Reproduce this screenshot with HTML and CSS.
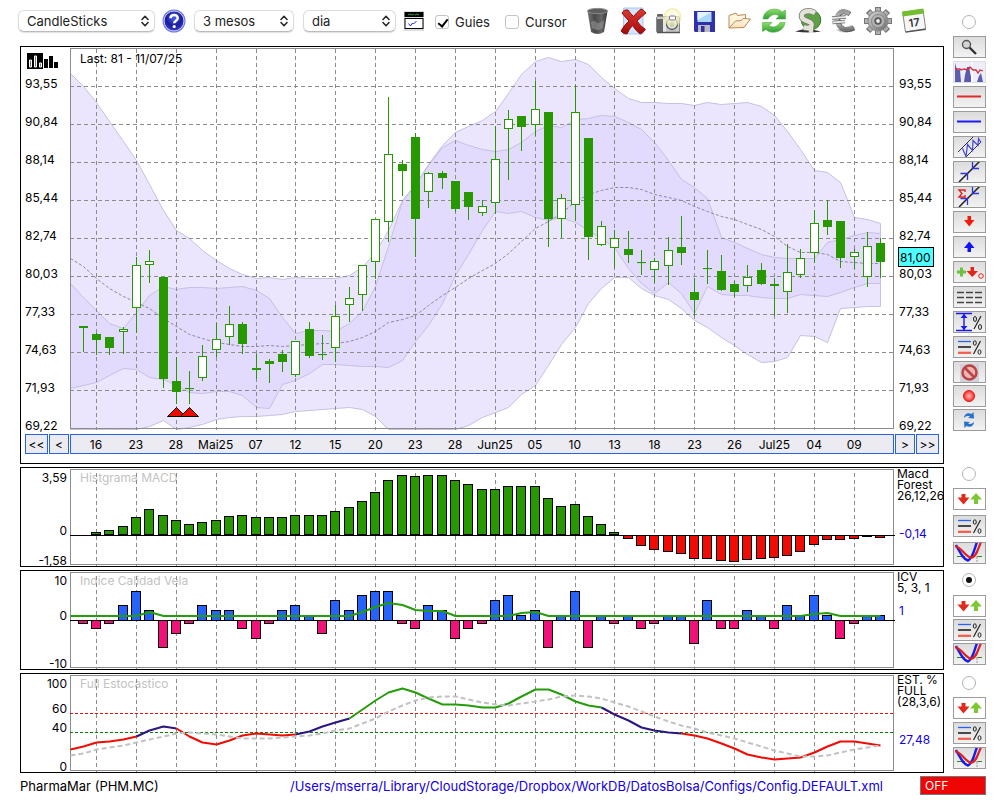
FILE: index.html
```html
<!DOCTYPE html>
<html lang="ca">
<head>
  <meta charset="UTF-8">
  <meta name="viewport" content="width=device-width, initial-scale=1.0">
  <title>PharmaMar (PHM.MC)</title>
  <link rel="stylesheet" href="styles.css">
</head>
<body>
  <!-- shared icons -->
  <svg class="defs" aria-hidden="true">
    <defs>
      <linearGradient id="gTrash" x1="0" x2="1" y1="0" y2="0"><stop offset="0" stop-color="#777"/><stop offset=".35" stop-color="#4a4a4a"/><stop offset=".7" stop-color="#666"/><stop offset="1" stop-color="#333"/></linearGradient>
      <radialGradient id="gHelp" cx=".5" cy=".35" r=".65"><stop offset="0" stop-color="#4a5fe8"/><stop offset=".6" stop-color="#1c1c9c"/><stop offset="1" stop-color="#3a3ad0"/></radialGradient>
      <linearGradient id="gGreen" x1="0" x2="0" y1="0" y2="1"><stop offset="0" stop-color="#8ede68"/><stop offset="1" stop-color="#2f9e38"/></linearGradient>
      <linearGradient id="gMetal" x1="0" x2="1" y1="0" y2="1"><stop offset="0" stop-color="#d8d8d8"/><stop offset=".5" stop-color="#a2a2a2"/><stop offset="1" stop-color="#666"/></linearGradient>
      <linearGradient id="gEuro" x1="0" x2="0" y1="0" y2="1"><stop offset="0" stop-color="#9a9a9a"/><stop offset=".5" stop-color="#d6d6d6"/><stop offset="1" stop-color="#777"/></linearGradient>
      <linearGradient id="gFolder" x1="0" x2="0" y1="0" y2="1"><stop offset="0" stop-color="#fff8e8"/><stop offset="1" stop-color="#f9dfb6"/></linearGradient>
      <linearGradient id="gCross" x1="0" x2="0" y1="0" y2="1"><stop offset="0" stop-color="#e03a34"/><stop offset="1" stop-color="#a30a0a"/></linearGradient>
      <radialGradient id="gFlash"><stop offset="0" stop-color="#fff"/><stop offset=".6" stop-color="#fbf8d0" stop-opacity=".8"/><stop offset=".85" stop-color="#ece79a" stop-opacity=".8"/><stop offset="1" stop-color="#fff" stop-opacity="0"/></radialGradient>
      <radialGradient id="gRed"><stop offset="0" stop-color="#ffc0b8"/><stop offset="1" stop-color="#f22"/></radialGradient>
    </defs>
    <symbol id="updown" viewBox="0 0 8 12"><path d="M1 4.500L4 1.300L7 4.500M1 7.500L4 10.700L7 7.500" fill="none" stroke="#2b2b2b" stroke-width="1.600" stroke-linecap="round" stroke-linejoin="round"/></symbol>
    <symbol id="levels" viewBox="0 0 31 20">
      <path d="M4 4.500H17" stroke="#2b62f5" stroke-width="1.300"/><path d="M4 10H17" stroke="#222" stroke-width="1.600"/><path d="M4 15.800H17" stroke="#f65a48" stroke-width="2.200"/>
      <path d="M26.500 4L19.500 17" stroke="#222" stroke-width="1.200"/>
      <ellipse cx="20.800" cy="6" rx="1.500" ry="2.200" fill="none" stroke="#222"/><ellipse cx="25.500" cy="15" rx="1.500" ry="2.200" fill="none" stroke="#222"/>
    </symbol>
    <symbol id="swap" viewBox="0 0 31 20">
      <path d="M7.500 5h4v3.500h4L9.500 15.500L3.500 8.500h4z" fill="#e02a1c"/>
      <path d="M20 15h4v-4.500h4L22 4L16 10.500h4z" fill="#7dc832"/>
    </symbol>
    <symbol id="curves" viewBox="0 0 31 20">
      <path d="M3 13.500H28" stroke="#2f8a1a" stroke-dasharray="5 2 1 2"/><path d="M23 13v6" stroke="#999" stroke-dasharray="3 1"/>
      <path d="M2 2C6 9 9 16 14 17.500C19 15 20 7 23 -1" fill="none" stroke="#1a1ae8" stroke-width="2.400"/>
      <path d="M1 3.500C7 3 11 14 17 14.800C22 14.500 24 6 27 -1" fill="none" stroke="#e02020" stroke-width="2.200"/>
    </symbol>
    <symbol id="trend" viewBox="0 0 31 20">
      <path d="M5 20L26 -1" stroke="#222" stroke-width="1.500"/>
      <path d="M6.500 11.500H13.500V18M18.500 0V6.500H25" fill="none" stroke="#3333dd" stroke-width="1.300"/>
    </symbol>
  </svg>

  <div class="app">
    <header class="toolbar">
      <span class="select wide"><select aria-label="Tipus de gràfic"><option>CandleSticks</option></select><svg><use href="#updown"/></svg></span>
      <button class="icon help" title="Ajuda">
        <svg viewBox="0 0 24 24"><circle cx="12" cy="12" r="11.500" fill="#6d78e6"/><circle cx="12" cy="12" r="10" fill="url(#gHelp)" stroke="#c9cff8"/>
          <path d="M8.500 9.300C8.500 4.800 15.800 4.900 15.700 9.200C15.600 11.700 12.300 11.800 12.200 14.200" fill="none" stroke="#fff" stroke-width="2.500"/><circle cx="12.200" cy="17.600" r="1.600" fill="#fff"/></svg>
      </button>
      <span class="select medium"><select aria-label="Període"><option>3 mesos</option></select><svg><use href="#updown"/></svg></span>
      <span class="select small"><select aria-label="Interval"><option>dia</option></select><svg><use href="#updown"/></svg></span>
      <button class="icon mini" title="Finestra">
        <svg viewBox="0 0 20 20"><rect width="20" height="20" fill="#ddd"/><rect x=".5" y="1" width="19" height="5" fill="#000"/><path d="M4 4l2-1 2 1 2-1M11 4l2-1 2 1" stroke="#2fae2f" fill="none"/><rect x="1" y="7.500" width="18" height="10" fill="#fff" stroke="#000"/><path d="M4.500 12.500l2 2.500 2-3 1 1 3-3" fill="none" stroke="#22f"/></svg>
      </button>
      <label class="check"><input type="checkbox" checked>Guies</label>
      <label class="check second"><input type="checkbox">Cursor</label>

      <div class="actions">
        <button class="icon" title="Buidar">
          <svg viewBox="0 0 28 28"><path d="M3.500 4L7 25Q13.500 29 20 25L23.500 4z" fill="url(#gTrash)"/><ellipse cx="13.500" cy="4" rx="10" ry="2.600" fill="#5e5e5e" stroke="#8a8a8a"/><path d="M7 15q3-3 5 0t8-2l-1 8q-5 4-11 0z" fill="#999" opacity=".55"/></svg>
        </button>
        <button class="icon" title="Esborrar">
          <svg viewBox="0 0 28 28"><path d="M4.500 1h19.500v26H4.500z" fill="#d3e5fb" stroke="#a9c8ee"/><path d="M3 6Q5 2 9 3Q11 6 14.500 9.500Q18 5 22 2Q25 3 27 6Q22 10 18 14Q21 19 26.500 22.500Q24 26 21 27Q17 24 13.500 18.500Q10 22 8 27Q4 27 2 24Q5 18 10 14Q6 10 3 6z" fill="url(#gCross)" stroke="#8d1210"/></svg>
        </button>
        <button class="icon" title="Captura">
          <svg viewBox="0 0 28 28"><rect x="3" y="7" width="6" height="4" rx="1" fill="#666"/><rect x="2.500" y="9.500" width="23" height="16" rx="1.500" fill="#c9c9c9" stroke="#8a8a8a"/><path d="M3 12h6v13H3z" fill="#686868"/><path d="M9 12h3v13H9z" fill="#e6e6e6"/><path d="M3 25.500h23" stroke="#555" stroke-width="1.500"/><circle cx="18" cy="17" r="5.500" fill="#ddd" stroke="#555" stroke-width="1.300"/><circle cx="18" cy="17" r="2.500" fill="#999"/><circle cx="18.500" cy="10" r="10" fill="url(#gFlash)" opacity=".85"/><rect x="15.500" y="9" width="6" height="4" rx="1" fill="#fff" stroke="#777"/></svg>
        </button>
        <button class="icon" title="Desar">
          <svg viewBox="0 0 28 28"><path d="M5 4h21v21H6l-1-1z" fill="#3030ac"/><path d="M8.500 5h14v10h-14z" fill="#a9d8fa"/><path d="M8.500 5h14L8.500 13z" fill="#e2f4ff"/><rect x="9" y="18" width="12" height="7" fill="#bbb"/><rect x="12" y="19" width="3.500" height="6" fill="#3030ac"/></svg>
        </button>
        <button class="icon" title="Obrir">
          <svg viewBox="0 0 28 28"><path d="M5 21V8.500L12 6l1.500 2.500L21.500 7.500V12" fill="#fff4dc" stroke="#b98a55"/><path d="M5 21L11.500 14l6-.5 1.500-2 7.500.5-6.500 8.500z" fill="url(#gFolder)" stroke="#b98a55"/></svg>
        </button>
        <button class="icon" title="Refrescar">
          <svg viewBox="0 0 28 28"><path d="M4 12C5 1 19 0 23 5l3.500-2v9H17l3-3C16 6 11 8 9 12z" fill="url(#gGreen)" stroke="#4cae44" stroke-width=".6"/><path d="M26 15.500C25 26 11 27.500 7 22.500l-3.500 2v-9H13l-3 3C14 21.500 19 19.500 21 15.500z" fill="url(#gGreen)" stroke="#4cae44" stroke-width=".6"/></svg>
        </button>
        <button class="icon" title="Dividends">
          <svg viewBox="0 0 28 28"><path d="M1 24.500q8-3 17-2l9 2q-12 2-26 0z" fill="#333"/><circle cx="17" cy="13" r="9.800" fill="#5da045" stroke="#3f7a2c"/><path d="M21 6C14 2 6 5 8 10.500c2 4.500 11 3 9.500 8-1 3-5 3-8 1.500" fill="none" stroke="#777" stroke-width="6"/><path d="M21 6C14 2 6 5 8 10.500c2 4.500 11 3 9.500 8-1 3-5 3-8 1.500M17 19v7" fill="none" stroke="#e2e2d6" stroke-width="4.500"/></svg>
        </button>
        <button class="icon" title="Divisa">
          <svg viewBox="0 0 28 28"><path d="M7 23q10 6 19-2l-3-3z" fill="#aaa" opacity=".7"/><path d="M21 7C13 2 8 6 9 14s8 11 16 7" fill="none" stroke="#5c5c5c" stroke-width="5"/><path d="M20.500 6.500C13 2 7 6 8 13.500s8 11 16 7" fill="none" stroke="url(#gEuro)" stroke-width="4"/><path d="M3 11L17 10M3.500 15.500L16 14.500" stroke="#666" stroke-width="3.500"/><path d="M3 11L17 10M3.500 15.500L16 14.500" stroke="#e4e4e4" stroke-width="2"/></svg>
        </button>
        <button class="icon" title="Configuració">
          <svg viewBox="0 0 28 28"><g stroke="#777" stroke-width="6"><path d="M14 0v28M0 14h28M4 4l20 20M24 4L4 24"/></g><g stroke="#b0b0b0" stroke-width="4"><path d="M14 1v26M1 14h26M5 5l18 18M23 5L5 23"/></g><circle cx="14" cy="14" r="10" fill="url(#gMetal)" stroke="#888"/><circle cx="14" cy="14" r="6.500" fill="#b4b4b4" stroke="#888"/><circle cx="14" cy="14" r="3.700" fill="#5a5a5a"/><circle cx="14" cy="14" r="1.900" fill="#eee"/></svg>
        </button>
        <button class="icon" title="Calendari">
          <svg viewBox="0 0 28 28"><g transform="rotate(-8 15 14)"><rect x="5" y="4" width="20.500" height="19.500" rx="1" fill="#f7f7f7" stroke="#888"/><path d="M4.500 3h21.500v5H4.500z" fill="#72bd30"/><path d="M5 23.800h20.500" stroke="#555" stroke-width="1.300"/><text class="day" x="15" y="19.500" text-anchor="middle">17</text></g></svg>
        </button>
      </div>
    </header>

    <main class="panel main-panel">
      <svg class="chart price-chart" id="price"></svg>
      <nav class="timeline">
        <button class="far">&lt;&lt;</button>
        <button class="near">&lt;</button>
        <ol id="dates"></ol>
        <button class="near">&gt;</button>
        <button class="far">&gt;&gt;</button>
      </nav>
    </main>
    <aside class="side tools">
      <input type="radio" name="panel" aria-label="Preu">
      <button class="tool" title="Lupa"><svg viewBox="0 0 31 20"><path d="M15 10l7 7" stroke="#333" stroke-width="2.400"/><circle cx="12.500" cy="7.500" r="4" fill="#d4d4d4" stroke="#555" stroke-width="1.400"/></svg></button>
      <button class="tool flat" title="Volum"><svg viewBox="0 0 31 20"><rect width="31" height="20" fill="#eeeefb"/><path d="M1 20V1l2 7 3 0 1 12zM10 20l1-7 2-8h2l2 10 0 5zM23 20l2-6 2-3 2 9z" fill="#5b5bb0"/><path d="M18 0v20" stroke="#fff" stroke-width="1.500"/><path d="M1 7h5l1 1 3-1 4 1 2-3 3 3h3l2 3 2-3 3 1" fill="none" stroke="#d62a3a" stroke-width="1.300"/></svg></button>
      <button class="tool" title="Resistència"><svg viewBox="0 0 31 20"><path d="M3 9.500H27" stroke="#e02c2c" stroke-width="2"/></svg></button>
      <button class="tool" title="Suport"><svg viewBox="0 0 31 20"><path d="M3 9.500H27" stroke="#1c1cf0" stroke-width="2"/></svg></button>
      <button class="tool" title="Canal"><svg viewBox="0 0 31 20"><path d="M4 15L19 0M12 20L27 5" stroke="#333"/><path d="M8.500 11.500l3.500 8 1.500-12 5 6 .5-10 5 5 .5-7 2.500 4" fill="none" stroke="#4444dd" stroke-width="1.200"/></svg></button>
      <button class="tool" title="Tendència"><svg><use href="#trend"/></svg></button>
      <button class="tool" title="Regressió"><svg viewBox="0 0 31 20"><use href="#trend" width="31" height="20"/><path d="M11 5V3H5l3 3.500L5 10h6V8" fill="none" stroke="#e02020" stroke-width="1.400"/></svg></button>
      <button class="tool" title="Venda"><svg viewBox="0 0 31 20"><path d="M13.500 4h3.500v4h3.500l-5.200 6.500L10 8h3.500z" fill="#f31a0c"/></svg></button>
      <button class="tool" title="Compra"><svg viewBox="0 0 31 20"><path d="M13.500 15h3.500v-4h3.500L15.300 4.500L10 11h3.500z" fill="#1212f2"/></svg></button>
      <button class="tool" title="Senyals"><svg viewBox="0 0 31 20"><path d="M3 10h9M7.500 5.500v9" stroke="#6ec043" stroke-width="3"/><path d="M16.500 5h3.500v4h4l-5.700 6L12.500 9h4z" fill="#e3261c"/><circle cx="27" cy="14" r="2.300" fill="none" stroke="#e3261c"/></svg></button>
      <button class="tool" title="Línies"><svg viewBox="0 0 31 20"><path d="M3 5.500H28M3 10.500H28M3 15.500H28" stroke="#444" stroke-width="1.700" stroke-dasharray="7 2"/></svg></button>
      <button class="tool" title="Rang"><svg viewBox="0 0 31 20"><path d="M2 1.500H18M2 18.500H18M10 2v16" stroke="#1a1af0" stroke-width="1.400"/><path d="M6.500 6L10 2l3.500 4zM6.500 14l3.500 4 3.500-4z" fill="#1a1af0"/><path d="M27 4L20 17" stroke="#222" stroke-width="1.200"/><ellipse cx="21" cy="7" rx="1.500" ry="2.500" fill="none" stroke="#222"/><ellipse cx="26" cy="15" rx="1.500" ry="2.500" fill="none" stroke="#222"/></svg></button>
      <button class="tool" title="Nivells"><svg><use href="#levels"/></svg></button>
      <div class="last-tools">
        <button class="tool" title="Treure"><svg viewBox="0 0 31 20"><rect x="6" y="2" width="19" height="18" fill="#d3d0de"/><circle cx="15.500" cy="10.500" r="7" fill="#eeb4b4" stroke="#b84444" stroke-width="2.500"/><path d="M10.500 5.500l10 10" stroke="#b84444" stroke-width="2.500"/></svg></button>
        <button class="tool" title="Gravar"><svg viewBox="0 0 31 20"><circle cx="15" cy="10" r="5.500" fill="url(#gRed)" stroke="#e21c1c"/></svg></button>
        <button class="tool" title="Actualitzar"><svg viewBox="0 0 31 20"><path d="M10 8C10.500 3 15 2.500 17.500 4l2-2 .5 6.500-6-.5 2-1.500C14 5.500 12 6 10 8zM20 12c-.5 5-5 5.500-7.500 4l-2 2L10 11.500l6 .5-2 1.500c2 1 4 .5 6-1.500z" fill="#2a72cc"/></svg></button>
      </div>
    </aside>

    <section class="panel"><svg class="chart" id="macd"></svg></section>
    <aside class="side macd-side">
      <input type="radio" name="panel" aria-label="MACD">
      <button class="tool white" title="Ordre MACD"><svg><use href="#swap"/></svg></button>
      <button class="tool" title="Nivells MACD"><svg><use href="#levels"/></svg></button>
      <button class="tool" title="Corbes MACD"><svg><use href="#curves"/></svg></button>
    </aside>

    <section class="panel"><svg class="chart" id="icv"></svg></section>
    <aside class="side icv-side">
      <input type="radio" name="panel" aria-label="ICV" checked>
      <button class="tool white" title="Ordre ICV"><svg><use href="#swap"/></svg></button>
      <button class="tool" title="Nivells ICV"><svg><use href="#levels"/></svg></button>
      <button class="tool" title="Corbes ICV"><svg><use href="#curves"/></svg></button>
    </aside>

    <section class="panel"><svg class="chart" id="stoch"></svg></section>
    <aside class="side stoch-side">
      <input type="radio" name="panel" aria-label="Estocàstic">
      <button class="tool white" title="Ordre estocàstic"><svg><use href="#swap"/></svg></button>
      <button class="tool" title="Nivells estocàstic"><svg><use href="#levels"/></svg></button>
      <button class="tool" title="Corbes estocàstic"><svg><use href="#curves"/></svg></button>
    </aside>

    <footer class="status">
      <span>PharmaMar (PHM.MC)</span>
      <a href="#">/Users/mserra/Library/CloudStorage/Dropbox/WorkDB/DatosBolsa/Configs/Config.DEFAULT.xml</a>
      <button class="off">OFF</button>
    </footer>
  </div>

  <script src="charts.js"></script>
</body>
</html>
```

FILE: styles.css
```css
* {
  box-sizing: border-box;
}
body {
  margin: 0;
  background-color: #fff;
  color: #000;
  font-family: Inter, "Liberation Sans", sans-serif;
  font-size: 12px;
}
button {
  margin: 0;
  padding: 0;
  border: none;
  background: none;
  font: inherit;
  color: inherit;
}
.defs {
  position: absolute;
  width: 0;
  height: 0;
}
.app {
  display: grid;
  grid-template-columns: 1fr 33px;
  column-gap: 9px;
  row-gap: 3px;
  padding: 0 14px 0 20px;
}

/* toolbar */
.toolbar {
  display: flex;
  align-items: center;
  height: 43px;
  margin-left: -2px;
  padding-bottom: 1px;
  font-size: 13px;
}
.select {
  position: relative;
  flex: none;
}
.select select {
  display: block;
  width: 100%;
  height: 22px;
  padding: 0 8px;
  appearance: none;
  border: 1px solid #dcdcdc;
  border-bottom-color: #bbb;
  border-radius: 6px;
  background-color: #fff;
  box-shadow: 0 1px 1px rgba(0, 0, 0, 0.12);
  color: #222;
  font: inherit;
}
.select svg {
  position: absolute;
  top: 5px;
  right: 6px;
  width: 8px;
  height: 12px;
  pointer-events: none;
}
.wide {
  width: 137px;
}
.medium {
  width: 100px;
}
.small {
  width: 93px;
  margin-left: 9px;
}
.icon svg {
  display: block;
  width: 28px;
  height: 28px;
}
.help {
  margin: 0 8px 0 7px;
}
.help svg {
  width: 24px;
  height: 24px;
}
.mini {
  margin: 0 11px 0 8px;
}
.mini svg {
  width: 20px;
  height: 20px;
}
.day {
  font-size: 11px;
  font-weight: 600;
  fill: #333;
}
.check {
  display: flex;
  align-items: center;
  gap: 6px;
  padding-top: 1px;
  color: #222;
}
.check input {
  position: relative;
  width: 14px;
  height: 14px;
  margin: 0;
  appearance: none;
  border: 1px solid #c4c4c4;
  border-radius: 3px;
  background-color: #fff;
}
.check input:checked::after {
  content: "";
  position: absolute;
  left: 4px;
  top: 1px;
  width: 4px;
  height: 8px;
  border: solid #000;
  border-width: 0 2px 2px 0;
  transform: rotate(38deg);
}
.second {
  margin-left: 15px;
}
.actions {
  display: flex;
  gap: 7px;
  margin-left: auto;
  margin-right: 17px;
}

/* charts */
.panel {
  grid-column: 1;
  min-width: 0;
  border: 1px solid #000;
}
.chart {
  display: block;
  width: 100%;
  height: 98px;
}
.price-chart {
  height: 387px;
}
.chart text {
  font-size: 12px;
  fill: #000;
}
.chart .title {
  fill: #c2c2c2;
}
.chart .value {
  fill: #1400e6;
}
.frame {
  fill: none;
  stroke: #8c8c8c;
}
.grid {
  stroke: #8c8c8c;
  stroke-dasharray: 4 3;
}
.axis {
  stroke: #000;
}
.band {
  fill: #ebe6fe;
  stroke: #c6c0e2;
}
.band.inner {
  fill: #e3dbfd;
}
.mid {
  fill: none;
  stroke: #8d86a3;
  stroke-dasharray: 3 2;
}
.candle {
  fill: #fff;
  stroke: #279800;
}
.candle.down {
  fill: #279800;
}
.arrow {
  fill: #ee0a00;
  stroke: #000;
}
.tag {
  fill: #4dffff;
  stroke: #000;
}
.bar {
  stroke: #000;
}
.bar.green {
  fill: #279800;
}
.bar.red {
  fill: #f00c05;
}
.bar.blue {
  fill: #2563fb;
}
.bar.pink {
  fill: #f01278;
}
.line {
  fill: none;
  stroke-width: 2;
  stroke-linejoin: round;
}
.line.green {
  stroke: #259c0c;
}
.line.red {
  stroke: #f00c05;
}
.line.navy {
  stroke: #2c1680;
}
.line.signal {
  stroke: #c2c2c2;
  stroke-dasharray: 5 3;
}
.limit {
  stroke-dasharray: 3 2;
}
.limit.high {
  stroke: #e01010;
}
.limit.low {
  stroke: #0c7a0c;
}

/* timeline */
.timeline {
  display: flex;
  gap: 1px;
  margin: 0 4px 9px;
}
.timeline button,
.timeline ol {
  height: 20px;
  border: 1px solid #2563eb;
  background-color: #ebebf1;
  line-height: 20px;
}
.far {
  width: 23px;
}
.near {
  width: 20px;
}
.timeline ol {
  display: flex;
  flex: 1;
  margin: 0;
  padding: 0 19px 0 5px;
  list-style: none;
  text-align: center;
}
.timeline li {
  flex: 1 1 0;
  min-width: 0;
}

/* side buttons */
.side {
  grid-column: 2;
  display: flex;
  flex-direction: column;
  align-items: center;
}
.tools {
  grid-row: 1 / 3;
  gap: 3px;
  padding-top: 15px;
}
.side input[type="radio"] {
  display: grid;
  place-items: center;
  flex: none;
  width: 14px;
  height: 14px;
  margin: 0 2px 0 0;
  appearance: none;
  border: 1px solid #b4b4b4;
  border-radius: 50%;
  background-color: #fff;
}
.side input[type="radio"]:checked::after {
  content: "";
  width: 6px;
  height: 6px;
  border-radius: 50%;
  background-color: #111;
}
.side.tools input[type="radio"] {
  margin-bottom: 4px;
}
.last-tools {
  display: flex;
  flex-direction: column;
  gap: 2px;
}
.macd-side {
  gap: 5px;
}
.side.macd-side input[type="radio"] {
  margin-bottom: 2px;
}
.icv-side {
  gap: 2px;
  padding-top: 3px;
}
.side.icv-side input[type="radio"] {
  margin-bottom: 6px;
}
.stoch-side {
  gap: 3px;
  padding-top: 3px;
}
.side.stoch-side input[type="radio"] {
  margin-bottom: 4px;
}
.tool {
  flex: none;
  width: 33px;
  height: 22px;
  border: 1px solid #9c9c9c;
  background: linear-gradient(#dcdcdc, #f2f2f2);
}
.tool svg {
  display: block;
  width: 31px;
  height: 20px;
}
.tool.white {
  background: #fff;
}
.tool.flat {
  border-color: #ddd;
}

/* status bar */
.status {
  grid-column: 1 / 3;
  display: flex;
  align-items: center;
  font-size: 13px;
}
.status a {
  margin-left: auto;
  color: #1400e6;
  text-decoration: none;
}
.off {
  width: 66px;
  height: 19px;
  margin-left: 37px;
  padding-left: 4px;
  border: 1px solid #777;
  background-color: #f00505;
  color: #fff;
  font-size: 12px;
  text-align: left;
}
```

FILE: charts.js
```js
const LEFT = 49;    // width of the left scale
const RIGHT = 50;   // width of the right scale
const SLOTS = 62;   // sessions plus the empty margin on the right

const dates = ["16", "23", "28", "Mai25", "07", "12", "15", "20", "23", "28", "Jun25", "05", "10", "13", "18", "23", "26", "Jul25", "04", "09"];
const prices = ["93,55", "90,84", "88,14", "85,44", "82,74", "80,03", "77,33", "74,63", "71,93", "69,22"];

// high, top, bottom, low, 1 = closed lower
const candles = [
  [326,326,328,352,1], [333,334,340,355,1], [337,337,348,355,1], [327,329,332,354,0], [257,265,308,333,0],
  [250,261,265,283,0], [277,277,379,388,1], [357,381,392,404,1], [371,388,388,404,1], [345,356,378,381,0],
  [323,339,350,357,0], [306,324,337,345,0], [322,324,344,354,1], [354,368,370,379,1], [359,361,364,383,1],
  [350,354,362,372,1], [341,341,375,377,0], [322,329,356,358,1], [335,354,354,360,1], [305,316,348,362,0],
  [287,298,305,322,0], [265,265,295,311,0], [219,219,262,279,0], [97,154,222,242,0], [160,164,171,196,1],
  [133,137,219,257,1], [172,173,192,208,0], [171,173,178,189,1], [181,181,209,212,1], [192,192,207,220,1],
  [200,206,213,216,0], [126,159,203,214,0], [110,119,129,180,0], [116,116,127,151,1], [81,109,125,136,0],
  [112,112,219,247,1], [194,198,219,238,0], [85,112,205,221,0], [138,138,237,260,1], [221,226,245,246,0],
  [230,238,248,268,0], [231,249,255,263,1], [250,262,262,275,1], [258,261,270,283,0], [237,250,266,285,0],
  [216,247,253,265,1], [278,292,300,316,1], [250,268,268,284,1], [255,271,290,291,1], [281,284,292,297,1],
  [265,277,286,292,0], [263,270,284,285,1], [278,284,286,316,1], [244,272,292,313,0], [249,258,275,278,0],
  [210,223,253,263,0], [200,220,227,235,1], [221,221,258,268,1], [249,252,257,269,0], [232,246,277,287,0],
  [238,243,262,278,1]
];

const outerTop = [73,86,102,121,141,160,184,210,230,238,250,260,268,274,278,277,279,277,278,278,278,275,267,252,230,200,184,164,145,132,126,120,111,93,74,61,57,61,59,64,77,88,98,102,102,103,103,105,102,104,103,102,106,115,131,149,170,172,182,217,219,223];
const outerBottom = [429,429,429,429,429,429,426,420,429,427,424,419,417,416,416,415,414,411,410,409,408,407,409,416,429,429,429,429,429,429,425,417,412,407,394,385,365,344,327,303,288,277,277,288,295,299,308,320,327,337,345,354,362,361,357,335,336,342,308,307,306,306];
const innerTop = [283,297,310,323,328,312,295,286,289,287,287,288,287,286,290,298,317,333,330,330,331,323,311,286,246,201,185,165,147,140,145,149,151,149,142,131,125,127,119,118,115,116,122,129,142,160,179,187,198,237,242,248,254,257,258,258,258,242,239,235,232,233];
const innerBottom = [388,385,382,375,368,369,377,379,385,392,393,391,391,395,407,408,384,380,373,364,364,365,366,366,367,360,341,325,303,275,254,230,211,213,211,217,220,217,222,230,238,247,268,283,293,282,293,313,286,294,295,295,297,298,298,294,295,296,292,287,283,283];
const average = [258,266,278,288,296,302,308,318,326,334,338,342,344,346,346,345,346,345,344,343,343,341,337,331,322,319,315,305,295,287,278,270,263,253,241,228,221,213,201,194,190,187,187,189,194,197,200,206,211,216,219,224,229,236,246,252,252,254,261,262,263,263];

const macd = [0,0,532,530,526,517,509,515,520,524,522,520,516,515,517,517,517,515,515,515,511,507,501,492,480,475,476,475,475,480,484,489,489,486,486,486,498,506,504,516,524,532,539,546,550,552,554,559,559,561,562,560,559,558,556,552,545,540,540,539,537,538];

const icv = [0,-1,-2,-1,3,6,2,-6,-3,-1,3,2,2,-2,-4,-1,2,3,1,-3,4,2,5,6,6,-1,-2,3,2,-4,-2,-1,4,5,1,2,-6,1,6,-6,1,-1,1,-2,-1,1,1,-5,4,-2,-2,2,1,-2,3,1,5,1,-4,-1,1,1];
const icvLine = { 6: 612, 22: 612, 23: 607, 24: 603, 25: 605, 26: 610, 27: 611, 28: 611, 34: 613, 35: 612, 56: 614, 57: 613 };

const fast = [749,746,742,741,739,736,730,726,728,736,742,744,740,735,733,734,735,734,731,726,722,718,709,700,692,688,692,698,704,704,705,707,707,703,696,689,689,694,701,705,707,714,720,727,730,732,733,735,738,743,748,754,757,759,758,757,752,746,741,741,743,745];
const slow = [755,753,749,747,745,742,739,736,733,732,733,734,736,738,738,738,737,736,735,733,730,728,723,718,711,705,700,697,696,696,699,702,704,705,703,701,699,696,695,696,698,702,706,711,716,721,725,728,732,735,738,742,746,750,753,756,756,755,752,749,747,745];
const zones = [[0, 5, "red"], [5, 8, "navy"], [8, 17, "red"], [17, 21, "navy"], [21, 40, "green"], [40, 46, "navy"], [46, 61, "red"]];

let width, step;

const x = i => Math.floor(LEFT + i * step) + 0.5;
const line = (cls, x1, y1, x2, y2) => `<line class="${cls}" x1="${x1}" y1="${y1}" x2="${x2}" y2="${y2}"/>`;
const rect = (cls, x, y, w, h) => `<rect class="${cls}" x="${x}" y="${y}" width="${w}" height="${h}"/>`;
const text = (cls, x, y, s, anchor = "start") => `<text class="${cls}" x="${x}" y="${y}" text-anchor="${anchor}">${s}</text>`;
const points = ys => ys.map((y, i) => `${x(i)},${y + 0.5}`);

function band(cls, top, bottom) {
  return `<polygon class="${cls}" points="${points(top).concat(points(bottom).reverse()).join(" ")}"/>`;
}

function polyline(cls, ys, from = 0, to = 61) {
  return `<polyline class="${cls}" points="${points(ys).slice(from, to + 1).join(" ")}"/>`;
}

function verticals(top, bottom) {
  return dates.map((d, n) => line("grid", x(2 + n * 3), top, x(2 + n * 3), bottom)).join("");
}

function render(id, top, content) {
  const svg = document.getElementById(id);
  svg.setAttribute("viewBox", `0 ${top} ${width} ${svg.clientHeight}`);
  svg.innerHTML = content;
}

function drawPrice() {
  const right = width - RIGHT + 0.5;
  let s = band("band", outerTop, outerBottom) + band("band inner", innerTop, innerBottom);
  s += rect("frame", LEFT + 0.5, 48.5, right - LEFT - 0.5, 380);
  s += verticals(49, 430);
  prices.forEach((p, n) => {
    const y = Math.floor(86.3 + n * 38.05) + 0.5;
    if (n < 9) s += line("grid", LEFT, y, right + 1, y);
    const ty = Math.round(88 + n * 38.05);
    s += text("", 4, ty, p) + text("", width - 44, ty, p);
  });
  s += polyline("mid", average);
  candles.forEach(([high, top, bottom, low, down], n) => {
    const cx = x(n + 1);
    const cls = down ? "candle down" : "candle";
    s += line(cls, cx, high, cx, low) + rect(cls, cx - 4, top + 0.5, 8, Math.max(bottom - top - 1, 0.1));
  });
  [8, 9].forEach(i => s += `<path class="arrow" d="M${x(i) - 9} 416.5L${x(i)} 407.5L${x(i) + 9} 416.5z"/>`);
  // volume button in the corner
  s += '<path d="M6 53h16v16H6zM23 59h4v9h-4zM28 56h4v12h-4zM33 62h4v6h-4z"/><path d="M8.500 60v7h2v-7zM13.500 56v11h2v-11zM18.500 63v4h2v-4z" fill="#777" stroke="#fff"/>';
  s += text("", LEFT + 10, 63, "Last: 81 - 11/07/25");
  s += rect("tag", width - 44.5, 247.5, 35, 19) + text("", width - 43, 262, "81,00");
  render("price", 47, s);
}

// frame, guides, scales and texts common to the three indicators
function indicator(top, title, scale, info, value, valueY) {
  const right = width - RIGHT + 0.5;
  let s = text("title", LEFT + 10, top + 14, title);
  s += rect("frame", LEFT + 0.5, top + 1.5, right - LEFT - 0.5, 95) + verticals(top + 5, top + 98);
  scale.forEach(([label, y]) => s += text("", LEFT - 3, y, label, "end"));
  info.forEach((t, n) => s += text("", width - 46, top + 10 + n * 11, t));
  return s + text("value", width - 44, valueY, value);
}

function drawMacd() {
  let s = indicator(468, "Histgrama MACD", [["3,59", 482], ["0", 535], ["-1,58", 565]], ["Macd", "Forest", "26,12,26"], "-0,14", 538);
  macd.forEach((y, i) => {
    if (i < 2) return;
    s += y < 535
      ? rect("bar green", x(i) - 5, y + 0.5, 9, 534 - y)
      : rect("bar red", x(i) - 5, 535.5, 9, y - 536);
  });
  render("macd", 468, s + line("axis", LEFT, 535.5, width - RIGHT + 2, 535.5));
}

function drawIcv() {
  let s = indicator(571, "Indice Calidad Vela", [["10", 585], ["0", 620], ["-10", 668]], ["ICV", "5, 3, 1"], "1", 615);
  icv.forEach((v, i) => {
    const h = Math.round(Math.abs(v) * 4.9);
    if (v > 0) s += rect("bar blue", x(i) - 5, 620.5 - h, 9, h);
    if (v < 0) s += rect("bar pink", x(i) - 5, 620.5, 9, h - 2);
  });
  s += line("axis", LEFT, 620.5, width - RIGHT + 2, 620.5);
  s += polyline("line green", icv.map((v, i) => (icvLine[i] || 616) - 0.5));
  render("icv", 571, s);
}

function drawStoch() {
  const right = width - RIGHT + 2;
  let s = indicator(674, "Full Estocastico", [["100", 688], ["60", 713], ["40", 732], ["0", 771]], ["EST. %", "FULL", "(28,3,6)"], "27,48", 744);
  s += line("limit high", LEFT, 713.5, right, 713.5) + line("limit low", LEFT, 732.5, right, 732.5);
  zones.forEach(([from, to, color]) => s += polyline("line " + color, fast, from, to));
  render("stoch", 674, s + polyline("line signal", slow));
}

function draw() {
  width = document.getElementById("price").clientWidth;
  step = (width - LEFT - RIGHT + 1) / SLOTS;
  drawPrice();
  drawMacd();
  drawIcv();
  drawStoch();
}

document.getElementById("dates").innerHTML = dates.map(d => `<li>${d}</li>`).join("");
draw();
window.addEventListener("resize", draw);
```
